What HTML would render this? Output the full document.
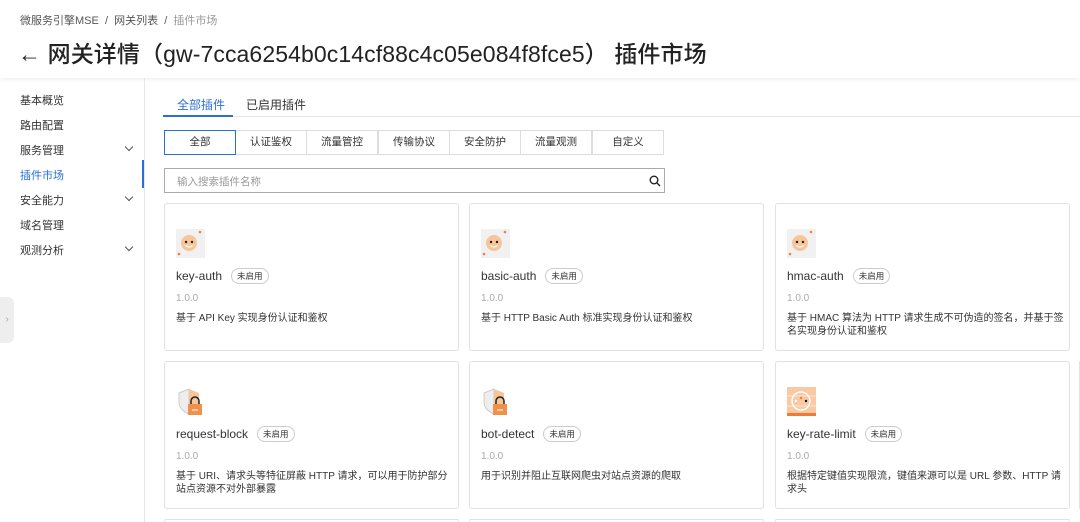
<!DOCTYPE html>
<html><head><meta charset="utf-8"><style>
*{margin:0;padding:0;box-sizing:border-box}
html,body{width:1080px;height:522px;overflow:hidden}
body{background:#fff;font-family:"Liberation Sans","Noto Sans CJK SC",sans-serif;color:#333;position:relative}
.hdr{position:absolute;left:0;top:0;width:1080px;height:78px;background:#fff;box-shadow:0 2px 4px rgba(0,0,0,.06)}
.bc{position:absolute;left:20px;top:12px;font-size:11px;color:#555}
.bc span{color:#999}
.title{position:absolute;left:18px;top:35px;font-size:23px;color:#222;font-weight:500;letter-spacing:.1px}
.side{position:absolute;left:0;top:78px;width:145px;height:444px;border-right:1px solid #e6e6e6}
.si{position:absolute;left:20px;font-size:11px;color:#333}
.chev{position:absolute;left:126px;width:6px;height:6px;border-right:1.3px solid #555;border-bottom:1.3px solid #555;transform:rotate(45deg)}
.tab{position:absolute;top:96px;font-size:12px}
.tabline{position:absolute;left:163px;top:116px;width:917px;height:1px;background:#e6e6e6}
.btn{position:absolute;top:130px;height:25px;width:72px;border:1px solid #ddd;font-size:10.5px;text-align:center;line-height:23px;color:#333;background:#fff}
.search{position:absolute;left:164px;top:168px;width:501px;height:25px;border:1px solid #aaa;font-size:10.5px;color:#999;padding:5px 12px}
.card{position:absolute;width:295px;height:148px;border:1px solid #e2e2e2;border-radius:3px;background:#fff}
.ic{position:absolute;left:11px;top:25px;width:29px;height:29px}
.nm{position:absolute;left:11px;top:64px;font-size:12px;color:#333}
.bd{display:inline-block;margin-left:9px;font-size:8.5px;border:1px solid #ccc;border-radius:8px;padding:1px 5px;vertical-align:1px;color:#333}
.ver{position:absolute;left:11px;top:89px;font-size:10px;color:#aaa}
.ds{position:absolute;left:11px;top:108px;width:278px;font-size:10px;line-height:13px;color:#333}
</style></head><body>
<div class="hdr">
<div class="bc">微服务引擎MSE &nbsp;/&nbsp; 网关列表 &nbsp;/&nbsp; <span>插件市场</span></div>
<div class="title">← 网关详情（gw-7cca6254b0c14cf88c4c05e084f8fce5） 插件市场</div>
</div>
<div class="side">
<div class="si" style="top:14px">基本概览</div>
<div class="si" style="top:39px">路由配置</div>
<div class="si" style="top:64px">服务管理</div><div class="chev" style="top:66px"></div>
<div class="si" style="top:89px;color:#2a6fd6">插件市场</div>
<div style="position:absolute;left:142px;top:82px;width:2px;height:28px;background:#2a6fd6"></div>
<div class="si" style="top:114px">安全能力</div><div class="chev" style="top:116px"></div>
<div class="si" style="top:139px">域名管理</div>
<div class="si" style="top:164px">观测分析</div><div class="chev" style="top:166px"></div>
</div>
<div style="position:absolute;left:0;top:297px;width:14px;height:46px;background:#eee;border-radius:0 6px 6px 0;color:#aaa;font-size:10px;line-height:46px;text-align:center">›</div>
<div class="tab" style="left:177px;color:#2a6fd6">全部插件</div>
<div class="tab" style="left:246px">已启用插件</div>
<div class="tabline"></div>
<div style="position:absolute;left:163px;top:115px;width:70px;height:2px;background:#2a6fd6"></div>
<div class="btn" style="left:235px">认证鉴权</div>
<div class="btn" style="left:306px">流量管控</div>
<div class="btn" style="left:378px">传输协议</div>
<div class="btn" style="left:449px">安全防护</div>
<div class="btn" style="left:520px">流量观测</div>
<div class="btn" style="left:592px">自定义</div>
<div class="btn" style="left:164px;border-color:#2a6fd6">全部</div>
<div class="search">输入搜索插件名称
<svg style="position:absolute;right:3px;top:6px" width="12" height="12" viewBox="0 0 12 12"><circle cx="5" cy="5" r="3.8" fill="none" stroke="#222" stroke-width="1.4"/><line x1="8" y1="8" x2="11" y2="11" stroke="#222" stroke-width="1.4"/></svg></div>

<div class="card" style="left:164px;top:203px">
<svg class="ic" viewBox="0 0 29 29"><rect width="29" height="29" fill="#f1f1f1"/><circle cx="13" cy="14" r="8" fill="#f6c59a"/><circle cx="10" cy="13" r="1.2" fill="#222"/><circle cx="16" cy="13" r="1.2" fill="#222"/><path d="M9.5 16.5q3.5 3 7 0" stroke="#fff" stroke-width="1.2" fill="none"/><circle cx="3" cy="25" r="1.3" fill="#f08040"/><circle cx="24" cy="3" r="1.3" fill="#f08040"/></svg>
<div class="nm">key-auth<span class="bd">未启用</span></div><div class="ver">1.0.0</div><div class="ds">基于 API Key 实现身份认证和鉴权</div></div>
<div class="card" style="left:469px;top:203px">
<svg class="ic" viewBox="0 0 29 29"><rect width="29" height="29" fill="#f1f1f1"/><circle cx="13" cy="14" r="8" fill="#f6c59a"/><circle cx="10" cy="13" r="1.2" fill="#222"/><circle cx="16" cy="13" r="1.2" fill="#222"/><path d="M9.5 16.5q3.5 3 7 0" stroke="#fff" stroke-width="1.2" fill="none"/><circle cx="3" cy="25" r="1.3" fill="#f08040"/><circle cx="24" cy="3" r="1.3" fill="#f08040"/></svg>
<div class="nm">basic-auth<span class="bd">未启用</span></div><div class="ver">1.0.0</div><div class="ds">基于 HTTP Basic Auth 标准实现身份认证和鉴权</div></div>
<div class="card" style="left:775px;top:203px">
<svg class="ic" viewBox="0 0 29 29"><rect width="29" height="29" fill="#f1f1f1"/><circle cx="13" cy="14" r="8" fill="#f6c59a"/><circle cx="10" cy="13" r="1.2" fill="#222"/><circle cx="16" cy="13" r="1.2" fill="#222"/><path d="M9.5 16.5q3.5 3 7 0" stroke="#fff" stroke-width="1.2" fill="none"/><circle cx="3" cy="25" r="1.3" fill="#f08040"/><circle cx="24" cy="3" r="1.3" fill="#f08040"/></svg>
<div class="nm">hmac-auth<span class="bd">未启用</span></div><div class="ver">1.0.0</div><div class="ds">基于 HMAC 算法为 HTTP 请求生成不可伪造的签名，并基于签名实现身份认证和鉴权</div></div>
<div class="card" style="left:1080px;top:203px;width:0"></div>

<div class="card" style="left:164px;top:361px">
<svg class="ic" viewBox="0 0 29 29"><path d="M13 2L3 6v9c0 6 5 10 10 12z" fill="#eee" stroke="#ccc"/><path d="M13 2l10 4v9c0 6-5 10-10 12z" fill="#f6c59a"/><rect x="12" y="17" width="14" height="11" fill="#f0904a"/><path d="M15 17v-3a4 4 0 0 1 8 0v3" stroke="#222" stroke-width="1.5" fill="none"/><line x1="16" y1="23" x2="22" y2="23" stroke="#fff"/></svg>
<div class="nm">request-block<span class="bd">未启用</span></div><div class="ver">1.0.0</div><div class="ds">基于 URI、请求头等特征屏蔽 HTTP 请求，可以用于防护部分站点资源不对外部暴露</div></div>
<div class="card" style="left:469px;top:361px">
<svg class="ic" viewBox="0 0 29 29"><path d="M13 2L3 6v9c0 6 5 10 10 12z" fill="#eee" stroke="#ccc"/><path d="M13 2l10 4v9c0 6-5 10-10 12z" fill="#f6c59a"/><rect x="12" y="17" width="14" height="11" fill="#f0904a"/><path d="M15 17v-3a4 4 0 0 1 8 0v3" stroke="#222" stroke-width="1.5" fill="none"/><line x1="16" y1="23" x2="22" y2="23" stroke="#fff"/></svg>
<div class="nm">bot-detect<span class="bd">未启用</span></div><div class="ver">1.0.0</div><div class="ds">用于识别并阻止互联网爬虫对站点资源的爬取</div></div>
<div class="card" style="left:775px;top:361px">
<svg class="ic" viewBox="0 0 29 29"><rect width="29" height="29" fill="#f8c9a2"/><rect y="26" width="29" height="3" fill="#f07a3a"/><line x1="0" y1="9" x2="29" y2="9" stroke="#fff" stroke-width=".6"/><line x1="0" y1="19" x2="29" y2="19" stroke="#fff" stroke-width=".6"/><circle cx="14" cy="14" r="9" fill="none" stroke="#fff" stroke-width="1.5"/><circle cx="9" cy="14" r="1.2" fill="#fff"/><circle cx="14" cy="11" r="1.2" fill="#f07a3a"/><circle cx="19" cy="14" r="1.2" fill="#111"/></svg>
<div class="nm">key-rate-limit<span class="bd">未启用</span></div><div class="ver">1.0.0</div><div class="ds">根据特定键值实现限流，键值来源可以是 URL 参数、HTTP 请求头</div></div>
<div class="card" style="left:1079px;top:361px;width:1px"></div>
<div class="card" style="left:164px;top:519px;height:3px;border-bottom:none"></div>
<div class="card" style="left:469px;top:519px;height:3px;border-bottom:none"></div>
<div class="card" style="left:775px;top:519px;height:3px;border-bottom:none"></div>
</body></html>
